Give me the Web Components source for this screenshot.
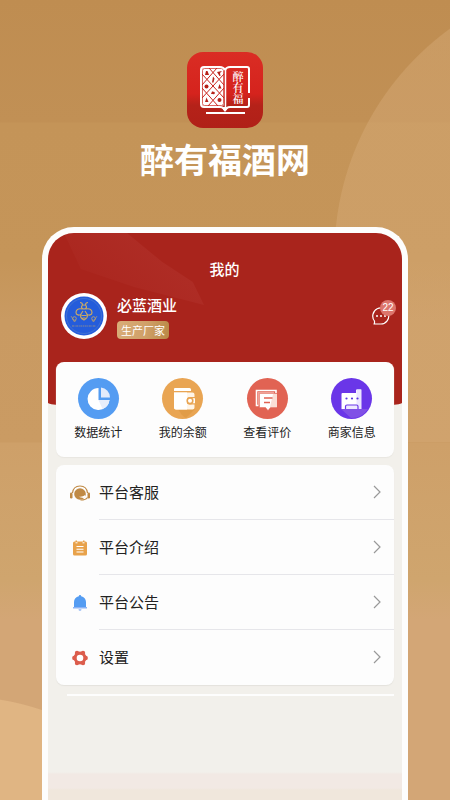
<!DOCTYPE html>
<html lang="zh-CN">
<head>
<meta charset="UTF-8">
<meta name="viewport" content="width=device-width, initial-scale=1.0">
<title>醉有福酒网</title>
<style>
    body {
        margin: 0;
        font-family: "Noto Sans CJK SC", "Noto Sans", sans-serif;
        color: #222;
    }
</style>
</head>
<body>
<promo-page>
    <app-logo slot="brand"></app-logo>
    <span slot="title">醉有福酒网</span>
    <phone-screen>
        <profile-header slot="header" name="必蓝酒业" tag="生产厂家" unread="22">我的</profile-header>
        <quick-menu>
            <quick-item icon="chart" color="#549cf2">数据统计</quick-item>
            <quick-item icon="wallet" color="#e9a553">我的余额</quick-item>
            <quick-item icon="comment" color="#e16353">查看评价</quick-item>
            <quick-item icon="store" color="#6a36e8">商家信息</quick-item>
        </quick-menu>
        <menu-list>
            <menu-row icon="service">平台客服</menu-row>
            <menu-row icon="notes">平台介绍</menu-row>
            <menu-row icon="bell">平台公告</menu-row>
            <menu-row icon="gear">设置</menu-row>
        </menu-list>
    </phone-screen>
</promo-page>

<script>
const icons = {
    chart: /*html*/`<svg viewBox="0 0 41 41">
        <path d="M20.500 10a11 11 0 1 0 11 12h-11z" fill="#fff"/>
        <path d="M23 9.500a10 10 0 0 1 9 10h-9z" fill="#e3ebfb"/>
        <path d="M20.500 22h11a11 11 0 0 1-7 9z" fill="#e8eefb"/>
    </svg>`,
    wallet: /*html*/`<svg viewBox="0 0 41 41">
        <path d="M16 31h17l-9 9a20 20 0 0 1-4-3z" fill="#dc963f" opacity=".6"/>
        <path d="M13 10h14.500a1.500 1.500 0 0 1 1.500 1.500V13H12v-2a1 1 0 0 1 1-1z" fill="#fff"/>
        <path d="M12 14.500h18.500a2 2 0 0 1 2 2V19H28a3.800 3.800 0 0 0 0 7.600h4.500v3a2 2 0 0 1-2 2H14a2 2 0 0 1-2-2z" fill="#fff5e8"/>
        <path d="M12 14.500h13v17H14a2 2 0 0 1-2-2z" fill="#fff"/>
        <path d="M33 20.300h-5a2.500 2.500 0 0 0 0 5h5z" fill="#fff"/>
        <circle cx="28" cy="22.800" r="2.800" fill="#fff" stroke="#e9a553" stroke-width="1.600"/>
    </svg>`,
    comment: /*html*/`<svg viewBox="0 0 41 41">
        <path d="M11.500 27.500h-2v-15h19.500V15" fill="none" stroke="#fff" stroke-width="1.600"/>
        <path d="M11 14h16v13H11z" fill="#f0a298"/>
        <path d="M12.500 15.500h17.500v14h-6.500L21 32.500l-2.500-3h-6z" fill="#fff" stroke="#e16353" stroke-width=".5"/>
        <path d="M26 16h4v13h-7z" fill="#faded5"/>
        <path d="M17 20h8.500M17 24.500h6" stroke="#e16353" stroke-width="1.600"/>
    </svg>`,
    store: /*html*/`<svg viewBox="0 0 41 41">
        <path d="M10 31h27a20 20 0 0 1-17 9z" fill="#8a5be6" opacity=".7"/>
        <path d="M10.500 16a1 1 0 0 1 1-1H25v-2.500a1 1 0 0 1 1-1h4v19.500H10.500z" fill="#fff"/>
        <path d="M25.500 11.500h5V31h-5z" fill="#ebe5ff"/>
        <path d="M14.500 31v-2.500a1.500 1.500 0 0 1 1.500-1.500h9.500a1.500 1.500 0 0 1 1.500 1.500V31" fill="#eee9ff" stroke="#6a36e8" stroke-width="1.200"/>
        <g fill="#5b34e0"><circle cx="15.500" cy="20.500" r="1.100"/><circle cx="21" cy="20.500" r="1.100"/><circle cx="26.500" cy="20.500" r="1.100"/></g>
    </svg>`,
    service: /*html*/`<svg viewBox="0 0 24 24">
        <path d="M4.500 12C5 7.500 8 5 12 5s7 2.500 7.500 7" fill="none" stroke="#c08a45" stroke-width="1.200"/>
        <rect x="2" y="11.500" width="2.500" height="6" rx="1.200" fill="#c08a45"/>
        <rect x="19.500" y="11.500" width="2.500" height="6" rx="1.200" fill="#c08a45"/>
        <circle cx="12" cy="13" r="5.800" fill="#c08a45"/>
        <path d="M11 15.500c2 .5 4.500 0 6-1.500l.8 2.500c-2 .8-4.800.6-6.800-1z" fill="#fff"/>
        <path d="M19.500 16.500c-1 1.800-3.500 2.500-7 2.500" fill="none" stroke="#c08a45" stroke-width="1.200"/>
    </svg>`,
    notes: /*html*/`<svg viewBox="0 0 24 24">
        <path d="M5 7a1.500 1.500 0 0 1 1.500-1.500h1V4.500H9v1h6v-1h1.500v1h1A1.500 1.500 0 0 1 19 7v11a1.500 1.500 0 0 1-1.500 1.500h-11A1.500 1.500 0 0 1 5 18z" fill="#e8a24b"/>
        <path d="M8.500 10.500h7M8.500 13.300h7M8.500 16h7" stroke="#fff" stroke-width="1.100"/>
        <path d="M7.500 6.800h2M14.500 6.800h2" stroke="#fff" stroke-width="1"/>
    </svg>`,
    bell: /*html*/`<svg viewBox="0 0 24 24">
        <path d="M12 4a1.200 1.200 0 0 1 1.200 1.200C16 5.800 18 8 18 11v5H6v-5c0-3 2-5.200 4.800-5.800A1.200 1.200 0 0 1 12 4z" fill="#549cf2"/>
        <path d="M5 16h14v1.500H5zM10.500 18.300h3a1.500 1.500 0 0 1-3 0z" fill="#8bb3f5"/>
    </svg>`,
    gear: /*html*/`<svg viewBox="0 0 24 24">
        <g fill="#dc5d4c">
            <circle cx="12" cy="12" r="6.500"/>
            <circle cx="6.300" cy="12" r="2.200"/><circle cx="17.700" cy="12" r="2.200"/>
            <circle cx="9" cy="7" r="2.200"/><circle cx="15" cy="7" r="2.200"/>
            <circle cx="9" cy="17" r="2.200"/><circle cx="15" cy="17" r="2.200"/>
        </g>
        <circle cx="12" cy="12" r="3.300" fill="#fff"/>
    </svg>`
}

class PromoPage extends HTMLElement {

    constructor() {
        super();
        this.shadow = this.attachShadow({ mode: 'open' });
    }

    connectedCallback() {
        this.render()
    }

    render() {

        this.shadow.innerHTML =
        /*html*/`
        <style>
            :host{
                display: flex;
                flex-direction: column;
                align-items: center;
                box-sizing: border-box;
                min-height: 100vh;
                padding: 52px 42px 0;
                background:
                    radial-gradient(circle 280px at 614px 255px, rgba(217, 174, 124, 0.4) 279px, transparent 280px) 0 0 / 100% 442px no-repeat,
                    radial-gradient(circle 254px at -40px 950px, #e0b583 253px, transparent 254px),
                    linear-gradient(#bf8d51 0, #c19055 122px, #c49458 123px, #c59559 260px, #c99a62 320px, #ca9b63 442px, #cea069 443px, #cfa56e 580px, #d3a676 620px);
            }

            h1{
                margin: 7px 0 0;
                color: white;
                font-size: 34px;
                line-height: 48px;
                font-weight: 700;
            }

            main{
                display: flex;
                flex: 1;
                align-self: stretch;
                margin-top: 44px;
            }
        </style>

        <slot name="brand"></slot>
        <h1><slot name="title"></slot></h1>
        <main><slot></slot></main>
        `
    }
}

customElements.define('promo-page', PromoPage);

class AppLogo extends HTMLElement {

    constructor() {
        super();
        this.shadow = this.attachShadow({ mode: 'open' });
    }

    connectedCallback() {
        this.render()
    }

    render() {

        this.shadow.innerHTML =
        /*html*/`
        <style>
            :host{
                display: block;
                width: 76px;
                height: 76px;
                border-radius: 16px;
                overflow: hidden;
                background: linear-gradient(#da2d24, #d5231d 55%, #b52219 70%, #b02018);
            }

            svg{
                display: block;
            }

            text{
                font-family: "Noto Serif CJK SC", "Noto Sans CJK SC", serif;
                font-size: 11px;
                font-weight: 600;
                fill: white;
                writing-mode: vertical-rl;
            }
        </style>

        <svg width="76" height="76" viewBox="0 0 76 76">
            <rect x="15" y="16" width="22" height="38" rx="2" fill="#fff"/>
            <path d="M22 16L37 33M15 22L37 46M15 36L31 54M30 16L15 33M37 22L15 46M37 36L21 54" fill="none" stroke="#c9251d" stroke-width="1"/>
            <rect x="15.500" y="16.500" width="21" height="37" rx="2" fill="none" stroke="#c9251d" stroke-width=".7"/>
            <g fill="#b52219">
                <path d="M19 19h1.500l1.500 4h-4zM30 20l5-1-2 2 .5 3h-1zM26 24.500l1.500 2-1 4h-1.500zM24 42l1-2.500h1l1 2.500zM32.500 32l2 4.500h-3.500zM19.500 45.500l2 4.500h-3.500z"/>
                <circle cx="19.500" cy="34.500" r="2"/><circle cx="26.500" cy="41" r="1.300"/><circle cx="32.500" cy="48" r="2"/>
            </g>
            <g fill="none" stroke="#fff" stroke-width="2" stroke-linejoin="round">
                <path d="M38 18c-1-2-2-3-5-3H17a3 3 0 0 0-3 3v34a3 3 0 0 0 3 3h16c2 0 4 1 5 3 1-2 3-3 5-3h17a2 2 0 0 0 2-2v-7M62 41V17a2 2 0 0 0-2-2H43c-3 0-4 1-5 3"/>
                <path d="M38.500 18v38" stroke-width="1.500"/>
                <path d="M19 61h39"/>
            </g>
            <path d="M34 55h8l-4 5z" fill="#fff"/>
            <text x="51" y="19">醉有福</text>
        </svg>
        `
    }
}

customElements.define('app-logo', AppLogo);

class PhoneScreen extends HTMLElement {

    constructor() {
        super();
        this.shadow = this.attachShadow({ mode: 'open' });
    }

    connectedCallback() {
        this.render()
    }

    render() {

        this.shadow.innerHTML =
        /*html*/`
        <style>
            :host{
                display: flex;
                flex-direction: column;
                flex: 1;
                border: 6px solid #fdfdfd;
                border-bottom: none;
                border-radius: 32px 32px 0 0;
                overflow: hidden;
                background: linear-gradient(to top, #f0e7dc 0, #f0e7dc 10px, #f2e9e4 12px, #f2e9e4 26px, #f2f0eb 28px);
            }

            .cards{
                display: flex;
                flex-direction: column;
                gap: 8px;
                margin: -47px 8px 0;
                z-index: 1;
            }

            .line{
                height: 2px;
                margin: 9px 8px 0 19px;
                background-color: #fdfdfd;
            }
        </style>

        <slot name="header"></slot>
        <div class="cards"><slot></slot></div>
        <div class="line"></div>
        `
    }
}

customElements.define('phone-screen', PhoneScreen);

class ProfileHeader extends HTMLElement {

    constructor() {
        super();
        this.shadow = this.attachShadow({ mode: 'open' });
    }

    connectedCallback() {
        this.render()
    }

    render() {

        this.shadow.innerHTML =
        /*html*/`
        <style>
            :host{
                display: block;
                position: relative;
                padding: 24px 6px 70px 13px;
                border-radius: 0 0 50% 50% / 0 0 6px 6px;
                color: white;
                background-color: #a9241c;
            }

            /* faint light falling from the top left corner */
            :host::before{
                content: "";
                position: absolute;
                inset: 0 auto auto 16px;
                width: 140px;
                height: 72px;
                background: linear-gradient(220deg, rgba(190, 70, 65, 0.35), rgba(190, 70, 65, 0));
                clip-path: polygon(0 0, 45% 0, 70% 40%, 92% 68%, 100% 100%, 50% 75%, 12% 50%);
            }

            h2{
                position: relative;
                margin: 0 8px 0 0;
                font-size: 15px;
                line-height: 24px;
                font-weight: 500;
                text-align: center;
            }

            .profile{
                display: flex;
                position: relative;
                align-items: center;
                gap: 10px;
                margin-top: 12px;
            }

            .avatar{
                display: block;
                width: 46px;
                height: 46px;
            }

            .info{
                display: flex;
                flex: 1;
                flex-direction: column;
                align-items: flex-start;
                gap: 4px;
            }

            .name{
                font-size: 15px;
                line-height: 24px;
                font-weight: 500;
            }

            .tag{
                padding: 0 4px;
                border-radius: 4px;
                font-size: 11px;
                line-height: 18px;
                background: linear-gradient(100deg, #d9ad78, #d0a068 55%, #b98845);
            }

            button{
                position: relative;
                padding: 0;
                border: none;
                background: none;
                color: white;
                font: inherit;
            }

            button svg{
                display: block;
                margin-right: 6px;
            }

            .badge{
                position: absolute;
                top: -7px;
                right: 0;
                width: 16px;
                border-radius: 8px;
                font-family: "Liberation Sans", sans-serif;
                font-size: 10px;
                line-height: 16px;
                text-align: center;
                background-color: #dc756c;
            }
        </style>

        <h2><slot></slot></h2>
        <div class="profile">
            <svg class="avatar" viewBox="0 0 46 46">
                <circle cx="23" cy="23" r="23" fill="#fff"/>
                <circle cx="23" cy="23" r="19.500" fill="#245cdb"/>
                <circle cx="23" cy="23" r="17.500" fill="none" stroke="#5e86c8" stroke-width=".5"/>
                <g fill="none" stroke="#c9a765" stroke-width="1.200">
                    <path d="M19 9.500c2 0 2.500 1 2.500 2.500M27 9.500c-2 0-2.500 1-2.500 2.500"/>
                    <ellipse cx="23" cy="14" rx="2.500" ry="2"/>
                    <path d="M21 16c-4-1-6 1-6 3.500s3.500 3.500 5 1.500l2-3M25 16c4-1 6 1 6 3.500s-3.500 3.500-5 1.500l-2-3"/>
                    <path d="M20 21c-1.500 3 1 5 3 6 2-1 4.500-3 3-6M20.500 22.500h5M21.500 25h3"/>
                    <circle cx="13.500" cy="25.500" r="1.800" stroke-width=".8"/><circle cx="32.500" cy="25.500" r="1.800" stroke-width=".8"/>
                    <path d="M10 23l3.500 6 1.500-2M36 23l-3.500 6-1.500-2" stroke-width=".6"/>
                    <path d="M11 33h24" stroke-width="1" stroke-dasharray="2 .6 1 .6" opacity=".6"/>
                </g>
            </svg>
            <div class="info">
                <span class="name">${this.getAttribute("name")}</span>
                <span class="tag">${this.getAttribute("tag")}</span>
            </div>
            <button type="button" aria-label="消息">
                <svg width="18" height="18" viewBox="0 0 18 18">
                    <path d="M2.500 16.500V14A8 8 0 1 1 9 17H2z" fill="none" stroke="#fff" stroke-width="1.200" stroke-linejoin="round"/>
                    <g fill="#fff"><circle cx="5" cy="9" r="1"/><circle cx="9" cy="9" r="1"/><circle cx="13" cy="9" r="1"/></g>
                </svg>
                <span class="badge">${this.getAttribute("unread")}</span>
            </button>
        </div>
        `
    }
}

customElements.define('profile-header', ProfileHeader);

class QuickMenu extends HTMLElement {

    constructor() {
        super();
        this.shadow = this.attachShadow({ mode: 'open' });
    }

    connectedCallback() {
        this.render()
    }

    render() {

        this.shadow.innerHTML =
        /*html*/`
        <style>
            :host{
                display: grid;
                grid-template-columns: repeat(4, 1fr);
                padding: 16px 0;
                border-radius: 8px;
                background-color: #fdfdfd;
                box-shadow: 0 1px 1px #e8e6e1;
            }
        </style>

        <slot></slot>
        `
    }
}

customElements.define('quick-menu', QuickMenu);

class QuickItem extends HTMLElement {

    constructor() {
        super();
        this.shadow = this.attachShadow({ mode: 'open' });
    }

    connectedCallback() {
        this.render()
    }

    render() {

        this.shadow.innerHTML =
        /*html*/`
        <style>
            :host{
                display: block;
            }

            a{
                display: flex;
                flex-direction: column;
                align-items: center;
                gap: 4px;
                color: inherit;
                font-size: 12px;
                line-height: 18px;
                text-decoration: none;
            }

            .icon{
                width: 41px;
                height: 41px;
                border-radius: 50%;
                background-color: ${this.getAttribute("color")};
                overflow: hidden;
            }

            svg{
                display: block;
            }
        </style>

        <a href="#">
            <span class="icon">${icons[this.getAttribute("icon")]}</span>
            <slot></slot>
        </a>
        `
    }
}

customElements.define('quick-item', QuickItem);

class MenuList extends HTMLElement {

    constructor() {
        super();
        this.shadow = this.attachShadow({ mode: 'open' });
    }

    connectedCallback() {
        this.render()
    }

    render() {

        this.shadow.innerHTML =
        /*html*/`
        <style>
            :host{
                display: block;
                border-radius: 8px;
                background-color: #fdfdfd;
                box-shadow: 0 1px 1px #e4e2dd;
            }

            ::slotted(:last-child){
                --divider: transparent;
            }
        </style>

        <slot></slot>
        `
    }
}

customElements.define('menu-list', MenuList);

class MenuRow extends HTMLElement {

    constructor() {
        super();
        this.shadow = this.attachShadow({ mode: 'open' });
    }

    connectedCallback() {
        this.render()
    }

    render() {

        this.shadow.innerHTML =
        /*html*/`
        <style>
            :host{
                display: block;
            }

            a{
                display: flex;
                align-items: center;
                gap: 7px;
                padding-left: 12px;
                color: inherit;
                font-size: 15px;
                line-height: 54px;
                text-decoration: none;
            }

            .icon{
                width: 24px;
                height: 24px;
            }

            svg{
                display: block;
            }

            .text{
                display: flex;
                flex: 1;
                align-items: center;
                justify-content: space-between;
                padding-right: 12px;
                border-bottom: 1px solid var(--divider, #e6e6ea);
            }
        </style>

        <a href="#">
            <span class="icon">${icons[this.getAttribute("icon")]}</span>
            <span class="text">
                <slot></slot>
                <svg width="10" height="14" viewBox="0 0 10 14"><path d="M2 1l6 6-6 6" fill="none" stroke="#999" stroke-width="1.200"/></svg>
            </span>
        </a>
        `
    }
}

customElements.define('menu-row', MenuRow);
</script>
</body>
</html>
